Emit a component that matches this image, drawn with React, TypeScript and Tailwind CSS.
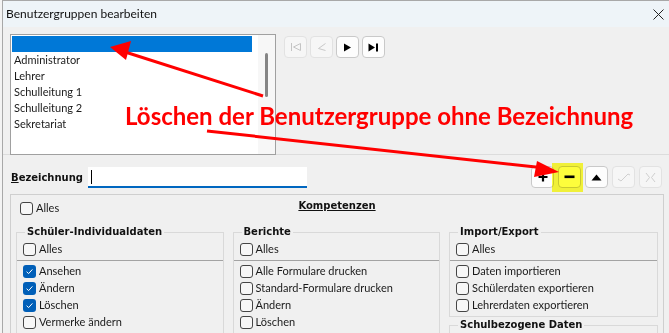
import React from "react";

const ui = "font-['Lato','Noto_Sans',sans-serif]";
const bold = "font-['DejaVu_Sans',sans-serif] font-bold text-[10px]";

function Box({ checked }: { checked?: boolean }) {
  if (checked) {
    return (
      <span className="w-[13px] h-[13px] rounded-[3px] bg-[#005fb8] flex items-center justify-center shrink-0">
        <svg width="9" height="9" viewBox="0 0 9 9">
          <path d="M1.6 4.7 L3.6 6.6 L7.4 2.4" fill="none" stroke="#fff" strokeWidth="1" />
        </svg>
      </span>
    );
  }
  return <span className="w-[13px] h-[13px] rounded-[3px] border border-[#454545] bg-[#f7f7f7] shrink-0" />;
}

function Check({ label, checked }: { label?: string; checked?: boolean }) {
  return (
    <div className="flex items-center gap-[3px] h-[17px] whitespace-nowrap">
      <Box checked={checked} />
      {label && <span>{label}</span>}
    </div>
  );
}

type Item = { label?: string; checked?: boolean };

function Group({ title, items }: { title: string; items?: Item[] }) {
  return (
    <fieldset className={`border border-[#d9d9d9] w-[209px] ${items ? "" : "h-[24px]"}`}>
      <legend className={`ml-[8px] px-[2px] leading-[14px] text-[#111] ${bold}`}>{title}</legend>
      {items && (
        <>
          <div className="px-[6px] pt-[2px]">
            <Check label="Alles" />
          </div>
          <div className="mt-[2px] border-t border-[#a3a3a3] pt-[2px] px-[6px] pb-[2px]">
            {items.map((it, i) => (
              <Check key={i} label={it.label} checked={it.checked} />
            ))}
          </div>
        </>
      )}
    </fieldset>
  );
}

function NavBtn({ disabled, children }: { disabled?: boolean; children: React.ReactNode }) {
  return (
    <div
      className={`w-[23px] h-[22px] rounded-[4px] border flex items-center justify-center ${
        disabled ? "border-[#e2e2e2] bg-[#f6f6f6]" : "border-[#c9c9c9] bg-[#fdfdfd]"
      }`}
    >
      {children}
    </div>
  );
}

export default function App() {
  const groups = ["Administrator", "Lehrer", "Schulleitung 1", "Schulleitung 2", "Sekretariat"];

  return (
    <div className={`relative w-[669px] h-[333px] overflow-hidden bg-[#f3f3f3] pl-[2px] text-[11px] text-[#1a1a1a] ${ui}`}>
      <div className="h-full border-l border-t border-[#a8a8a8] bg-[#f0f0f0] flex flex-col">
        {/* title bar */}
        <div className="h-[26px] shrink-0 bg-[#eef4f8] flex items-center justify-between pl-[3px] pr-[5px]">
          <span className="text-[12px] text-[#111]">Benutzergruppen bearbeiten</span>
          <svg width="11" height="11" viewBox="0 0 11 11">
            <path d="M0.5 0.5 L10.5 10.5 M10.5 0.5 L0.5 10.5" stroke="#222" strokeWidth="1" />
          </svg>
        </div>

        {/* list + navigation */}
        <div className="h-[128px] shrink-0 flex items-start pt-[7px] pl-[7px] border-b border-[#dcdcdc]">
          <div className="w-[266px] h-[121px] border border-[#a0a0a0] bg-white flex">
            <div className="flex-1 p-[1px]">
              <div className="h-[16px] w-[240px] bg-[#0078d7]" />
              {groups.map((g) => (
                <div key={g} className="h-[16px] leading-[16px] pl-[2px]">
                  {g}
                </div>
              ))}
            </div>
            <div className="w-[17px] bg-[#f7f7f7] flex justify-center">
              <div className="mt-[18px] w-[3px] h-[44px] rounded-full bg-[#858585]" />
            </div>
          </div>
          <div className="ml-[8px] mt-[2px] flex gap-[3px]">
            <NavBtn disabled>
              <svg width="12" height="10" viewBox="0 0 12 10">
                <path d="M1.5 1 V9 M10.5 1.5 L3.5 5 L10.5 8.5 Z" fill="none" stroke="#c4c4c4" strokeWidth="1" />
              </svg>
            </NavBtn>
            <NavBtn disabled>
              <svg width="10" height="10" viewBox="0 0 10 10">
                <path d="M8.5 1.5 L1.5 6.5 L8.5 8.5" fill="none" stroke="#c8c8c8" strokeWidth="1" />
              </svg>
            </NavBtn>
            <NavBtn>
              <svg width="9" height="9" viewBox="0 0 9 9">
                <path d="M1 0.5 L8 4.5 L1 8.5 Z" fill="#000" />
              </svg>
            </NavBtn>
            <NavBtn>
              <svg width="11" height="9" viewBox="0 0 11 9">
                <path d="M0.5 0.5 L7 4.5 L0.5 8.5 Z" fill="#000" />
                <rect x="8" y="0.5" width="2" height="8" fill="#000" />
              </svg>
            </NavBtn>
          </div>
        </div>

        {/* Bezeichnung row */}
        <div className="h-[39px] shrink-0 flex items-start pt-[11px] pl-[8px] pr-[7px]">
          <div className="h-[22px] w-[77px] flex items-center">
            <span className={`${bold} text-[#111]`}>
              <span className="underline">B</span>ezeichnung
            </span>
          </div>
          <div className="mt-[1px] w-[219px] h-[21px] bg-white border-b-2 border-[#0067c0] flex items-center pl-[3px]">
            <span className="w-px h-[14px] bg-black" />
          </div>
          <div className="ml-auto flex gap-[4px]">
            <NavBtn>
              <svg width="10" height="10" viewBox="0 0 10 10">
                <path d="M5 0.5 V9.5 M0.5 5 H9.5" stroke="#000" strokeWidth="2.2" />
              </svg>
            </NavBtn>
            <NavBtn>
              <svg width="11" height="4" viewBox="0 0 11 4">
                <rect x="0.5" y="0.5" width="10" height="2.6" fill="#000" />
              </svg>
            </NavBtn>
            <NavBtn>
              <svg width="11" height="7" viewBox="0 0 11 7">
                <path d="M0.5 6.5 L5.5 0.5 L10.5 6.5 Z" fill="#000" />
              </svg>
            </NavBtn>
            <NavBtn disabled>
              <svg width="14" height="10" viewBox="0 0 14 10">
                <path d="M1 7 L4 9 L11 2 L13 3" fill="none" stroke="#cfcfcf" strokeWidth="1" />
              </svg>
            </NavBtn>
            <NavBtn disabled>
              <svg width="11" height="11" viewBox="0 0 11 11">
                <path d="M1 1 L4.5 5.5 L1 10 M10 1 L6.5 5.5 L10 10" fill="none" stroke="#cfcfcf" strokeWidth="1" />
              </svg>
            </NavBtn>
          </div>
        </div>

        {/* Kompetenzen */}
        <div className="ml-[7px] w-[654px] flex-1 border-l border-t border-r border-[#cfcfcf] px-[5px] pt-[5px]">
          <div className="grid grid-cols-[1fr_auto_1fr] items-start">
            <div className="pl-[4px]">
              <Check label="Alles" />
            </div>
            <span className={`${bold} underline text-[#111] leading-[14px] mt-[-1px]`}>Kompetenzen</span>
            <div />
          </div>
          <div className="mt-[8px] flex gap-[9px] items-start">
            <Group
              title="Schüler-Individualdaten"
              items={[
                { label: "Ansehen", checked: true },
                { label: "Ändern", checked: true },
                { label: "Löschen", checked: true },
                { label: "Vermerke ändern" },
                {},
              ]}
            />
            <Group
              title="Berichte"
              items={[
                { label: "Alle Formulare drucken" },
                { label: "Standard-Formulare drucken" },
                { label: "Ändern" },
                { label: "Löschen" },
              ]}
            />
            <div className="flex flex-col gap-[1px]">
              <Group
                title="Import/Export"
                items={[
                  { label: "Daten importieren" },
                  { label: "Schülerdaten exportieren" },
                  { label: "Lehrerdaten exportieren" },
                ]}
              />
              <Group title="Schulbezogene Daten" />
            </div>
          </div>
        </div>
      </div>

      {/* annotation */}
      <div className="absolute left-[125px] top-[101px] text-[24px] font-bold text-[#ff0000] font-['Lato',sans-serif] whitespace-nowrap leading-[30px]">
        Löschen der Benutzergruppe ohne Bezeichnung
      </div>
      <div className="absolute left-[552px] top-[163px] w-[31px] h-[29px] bg-[#ffff3c] mix-blend-multiply" />
      <svg className="absolute left-0 top-0 pointer-events-none" width="669" height="333" viewBox="0 0 669 333">
        <path d="M263 96 L122 51" stroke="#ff0000" strokeWidth="3" />
        <path d="M110 47 L131 41 L126 60 Z" fill="#ff0000" />
        <path d="M207 131 L545 168" stroke="#ff0000" strokeWidth="3" />
        <path d="M559 172 L537 161 L534 177 Z" fill="#ff0000" />
      </svg>
    </div>
  );
}
